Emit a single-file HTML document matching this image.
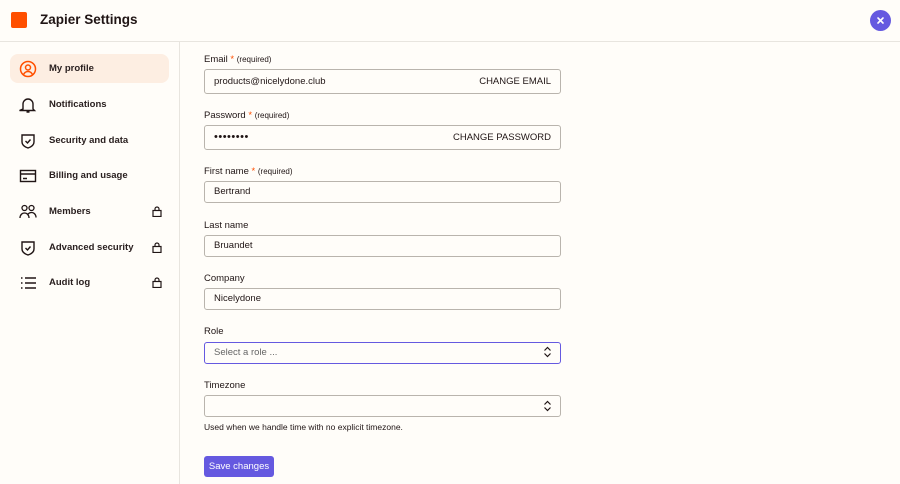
<!DOCTYPE html>
<html><head><style>
*{box-sizing:border-box;margin:0;padding:0}
body{width:900px;height:484px;background:#fffdf9;font-family:"Liberation Sans",sans-serif;color:#2b2358;position:relative;overflow:hidden}
.hdr{position:absolute;left:0;top:0;width:900px;height:42px;border-bottom:1px solid #e8e5df}
.logo{position:absolute;left:11px;top:12px;width:16px;height:16px;background:#ff4f00;border-radius:2px}
.title{position:absolute;left:40px;top:12px;font-size:13.5px;font-weight:bold;color:#201515}
.close{position:absolute;left:870px;top:10px;width:21px;height:21px;border-radius:50%;background:#6559e0}
.item{position:absolute;left:10px;width:159px;height:29px;font-size:9.5px;font-weight:bold;color:#2a2020}
.item span{position:absolute;left:39px;top:9px}
.item svg{position:absolute;left:9px;top:6px}
.item .lk{position:absolute;left:142px;top:9px}
.side{position:absolute;left:0;top:42px;width:180px;height:442px;border-right:1px solid #e8e5df}
.act{background:#fdeee2;border-radius:8px}
.lbl{position:absolute;left:204px;font-size:9.5px;color:#201515}
.lbl b{color:#ff4f00;font-weight:normal}
.lbl small{font-size:8px}
.inp{position:absolute;left:204px;width:357px;border:1px solid #b9b4ad;border-radius:3px;background:#fffdf9;font-size:9.5px;color:#201515;padding-left:9px}
.inp .r{position:absolute;right:9px}
.btn{position:absolute;left:204px;top:456px;width:70px;height:21px;background:#6559e0;border-radius:3px;color:#fff;font-size:9.5px;text-align:center;line-height:21px}
</style></head><body>
<div class="hdr"><div class="logo"></div><div class="title">Zapier Settings</div><div class="close"><svg width="21" height="21" viewBox="0 0 21 21" stroke="#fff" stroke-width="1.6" stroke-linecap="round"><path d="M8 8l5 5M13 8l-5 5"/></svg></div></div>
<div class="side">
<div class="item act" style="top:12px"><svg width="18" height="18" viewBox="0 0 18 18" fill="none" stroke="#ff4f00" stroke-width="1.5"><circle cx="9" cy="9" r="7.5"/><circle cx="9" cy="7.5" r="2.5"/><path d="M4.5 14.5c1-2 2.5-3 4.5-3s3.5 1 4.5 3"/></svg><span>My profile</span></div>
<div class="item" style="top:48px"><svg width="18" height="18" viewBox="0 0 18 18" fill="none" stroke="#201515" stroke-width="1.4"><path d="M4 13V8a5 5 0 0110 0v5l1.5 1.5h-15z M7.5 16h3"/></svg><span>Notifications</span></div>
<div class="item" style="top:84px"><svg width="18" height="18" viewBox="0 0 18 18" fill="none" stroke="#201515" stroke-width="1.4"><path d="M3 3h12v7c0 3-3 5-6 6-3-1-6-3-6-6z"/><path d="M6.5 9l2 2 3-3.5"/></svg><span>Security and data</span></div>
<div class="item" style="top:119px"><svg width="18" height="18" viewBox="0 0 18 18" fill="none" stroke="#201515" stroke-width="1.4"><rect x="1.5" y="3.5" width="15" height="11"/><path d="M1.5 7h15M4 11.5h4"/></svg><span>Billing and usage</span></div>
<div class="item" style="top:155px"><svg width="18" height="18" viewBox="0 0 18 18" fill="none" stroke="#201515" stroke-width="1.3"><circle cx="5.5" cy="5" r="2.5"/><circle cx="12.5" cy="5" r="2.5"/><path d="M1 15c0-3 2-5 4.5-5s4.5 2 4.5 5M9 11c1-1 2-1.5 3.5-1.5 2.5 0 4.5 2 4.5 5"/></svg><span>Members</span><svg class="lk" width="10" height="11" viewBox="0 0 10 11" fill="none" stroke="#201515" stroke-width="1.2"><rect x="1" y="4.5" width="8" height="6"/><path d="M3 4.5V3a2 2 0 014 0v1.5"/></svg></div>
<div class="item" style="top:191px"><svg width="18" height="18" viewBox="0 0 18 18" fill="none" stroke="#201515" stroke-width="1.4"><path d="M3 3h12v7c0 3-3 5-6 6-3-1-6-3-6-6z"/><path d="M6.5 9l2 2 3-3.5"/></svg><span>Advanced security</span><svg class="lk" width="10" height="11" viewBox="0 0 10 11" fill="none" stroke="#201515" stroke-width="1.2"><rect x="1" y="4.5" width="8" height="6"/><path d="M3 4.5V3a2 2 0 014 0v1.5"/></svg></div>
<div class="item" style="top:226px"><svg width="18" height="18" viewBox="0 0 18 18" fill="none" stroke="#201515" stroke-width="1.4"><path d="M6 4h11M6 9h11M6 14h11M2 4h1.5M2 9h1.5M2 14h1.5"/></svg><span>Audit log</span><svg class="lk" width="10" height="11" viewBox="0 0 10 11" fill="none" stroke="#201515" stroke-width="1.2"><rect x="1" y="4.5" width="8" height="6"/><path d="M3 4.5V3a2 2 0 014 0v1.5"/></svg></div>
</div>

<div class="lbl" style="top:54px">Email <b>*</b> <small>(required)</small></div>
<div class="inp" style="top:69px;height:25px;line-height:23px">products@nicelydone.club<span class="r">CHANGE EMAIL</span></div>
<div class="lbl" style="top:110px">Password <b>*</b> <small>(required)</small></div>
<div class="inp" style="top:125px;height:25px;line-height:23px"><span style="font-size:11px;letter-spacing:0.5px">••••••••</span><span class="r">CHANGE PASSWORD</span></div>
<div class="lbl" style="top:166px">First name <b>*</b> <small>(required)</small></div>
<div class="inp" style="top:181px;height:22px;line-height:20px">Bertrand</div>
<div class="lbl" style="top:220px">Last name</div>
<div class="inp" style="top:235px;height:22px;line-height:20px">Bruandet</div>
<div class="lbl" style="top:273px">Company</div>
<div class="inp" style="top:288px;height:22px;line-height:20px">Nicelydone</div>
<div class="lbl" style="top:326px">Role</div>
<div class="inp" style="top:342px;height:22px;line-height:19px;border:1.5px solid #6559e0;color:#666">Select a role ...</div>
<div class="lbl" style="top:380px">Timezone</div>
<div class="inp" style="top:395px;height:22px;line-height:20px"></div>
<svg style="position:absolute;left:543px;top:346px" width="9" height="12" viewBox="0 0 9 12" fill="none" stroke="#201515" stroke-width="1.2"><path d="M1.5 4.5L4.5 1.5 7.5 4.5M1.5 7.5L4.5 10.5 7.5 7.5"/></svg>
<svg style="position:absolute;left:543px;top:400px" width="9" height="12" viewBox="0 0 9 12" fill="none" stroke="#201515" stroke-width="1.2"><path d="M1.5 4.5L4.5 1.5 7.5 4.5M1.5 7.5L4.5 10.5 7.5 7.5"/></svg>
<div class="lbl" style="top:422px;font-size:8.5px">Used when we handle time with no explicit timezone.</div>
<div class="btn">Save changes</div>
</body></html>
